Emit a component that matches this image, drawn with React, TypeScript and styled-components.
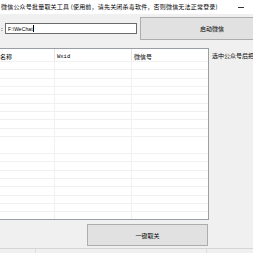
import React from "react";
import styled, { createGlobalStyle } from "styled-components";

const Global = createGlobalStyle`
  html, body { margin: 0; padding: 0; background: #f0f0f0; }
  body { font-family: "Noto Sans CJK SC", "Noto Sans", sans-serif; }
`;

const Window = styled.div`
  width: 253px;
  height: 253px;
  overflow: hidden;
  background: #f0f0f0;
  display: flex;
  flex-direction: column;
  font-size: 6px;
  color: #000;
`;

const TitleBar = styled.div`
  height: 14px;
  flex: none;
  background: #ffffff;
  display: flex;
  align-items: center;
  justify-content: space-between;
  padding: 0 9px 0 1px;
`;

const Title = styled.span`
  font-size: 6px;
  line-height: 14px;
  white-space: nowrap;
  letter-spacing: 0.2px;
`;

const Minimize = styled.span`
  width: 6px;
  height: 1px;
  background: #333;
`;

const TopRow = styled.div`
  display: flex;
  align-items: center;
  margin-top: 3px;
  height: 23px;
  flex: none;
`;

const Label = styled.span`
  width: 5px;
  flex: none;
  padding-left: 1px;
  box-sizing: border-box;
  font-size: 6px;
`;

const PathInput = styled.div`
  width: 132px;
  height: 11px;
  flex: none;
  box-sizing: border-box;
  background: #fff;
  border: 1px solid #6b6b6b;
  display: flex;
  align-items: center;
  padding-left: 2px;
  font-family: "Liberation Sans", sans-serif;
  font-size: 5px;
  letter-spacing: 0.1px;
`;

const Caret = styled.span`
  width: 1px;
  height: 7px;
  background: #000;
  margin-left: 0.5px;
`;

const Button = styled.div<{ $w: number; $h: number }>`
  width: ${(p) => p.$w}px;
  height: ${(p) => p.$h}px;
  flex: none;
  box-sizing: border-box;
  background: #e1e1e1;
  border: 1px solid #adadad;
  display: flex;
  align-items: center;
  justify-content: center;
  font-size: 6px;
`;

const StartButton = styled(Button)`
  margin-left: 3px;
`;

const MainRow = styled.div`
  display: flex;
  margin-top: 8px;
  height: 172px;
  flex: none;
`;

const ListView = styled.div`
  width: 210px;
  flex: none;
  margin-left: -1px;
  box-sizing: border-box;
  background: #fff;
  border: 1px solid #9a9ea6;
  display: flex;
  flex-direction: column;
  overflow: hidden;
`;

const Header = styled.div`
  height: 12px;
  flex: none;
  display: grid;
  grid-template-columns: 55px 77px 1fr;
  border-bottom: 1px solid #f2f2f2;
`;

const HeaderCell = styled.div<{ $pad: number }>`
  border-right: 1px solid #e5e5e5;
  padding-left: ${(p) => p.$pad}px;
  display: flex;
  align-items: center;
  padding-top: 2px;
  font-size: 6px;
  white-space: nowrap;
  &:last-child { border-right: none; }
`;

const WxidText = styled.span`
  font-family: "Liberation Mono", monospace;
  font-size: 5.5px;
`;

const Rows = styled.div`
  flex: 1;
  display: grid;
  grid-template-columns: 55px 77px 1fr;
  background-image: repeating-linear-gradient(
    to bottom,
    transparent 0px,
    transparent 7.35px,
    #f0f0f0 7.35px,
    #f0f0f0 8.35px
  );
`;

const RowCol = styled.div`
  border-right: 1px solid #f0f0f0;
  &:last-child { border-right: none; }
`;

const SideLabel = styled.div`
  margin-left: 3px;
  padding-top: 3px;
  font-size: 6px;
  white-space: nowrap;
`;

const BottomRow = styled.div`
  display: flex;
  margin-top: 4px;
  padding-left: 87px;
  height: 22px;
  flex: none;
`;

const StatusBar = styled.div`
  margin-top: 2px;
  flex: 1;
  border-top: 1px solid #d5d5d5;
  display: flex;
`;

const StatusPanel = styled.div<{ $w: number }>`
  width: ${(p) => p.$w}px;
  flex: none;
  border-right: 1px solid #dcdcdc;
`;

export default function App() {
  return (
    <>
      <Global />
      <Window>
        <TitleBar>
          <Title>微信公众号批量取关工具 (使用前，请先关闭杀毒软件，否则微信无法正常登录)</Title>
          <Minimize />
        </TitleBar>
        <TopRow>
          <Label>:</Label>
          <PathInput>
            F:\WeChat
            <Caret />
          </PathInput>
          <StartButton $w={144} $h={23}>启动微信</StartButton>
        </TopRow>
        <MainRow>
          <ListView>
            <Header>
              <HeaderCell $pad={0}>名称</HeaderCell>
              <HeaderCell $pad={2}>
                <WxidText>Wxid</WxidText>
              </HeaderCell>
              <HeaderCell $pad={2}>微信号</HeaderCell>
            </Header>
            <Rows>
              <RowCol />
              <RowCol />
              <RowCol />
            </Rows>
          </ListView>
          <SideLabel>选中公众号后把</SideLabel>
        </MainRow>
        <BottomRow>
          <Button $w={121} $h={22}>一键取关</Button>
        </BottomRow>
        <StatusBar>
          <StatusPanel $w={35} />
          <StatusPanel $w={170} />
        </StatusBar>
      </Window>
    </>
  );
}
